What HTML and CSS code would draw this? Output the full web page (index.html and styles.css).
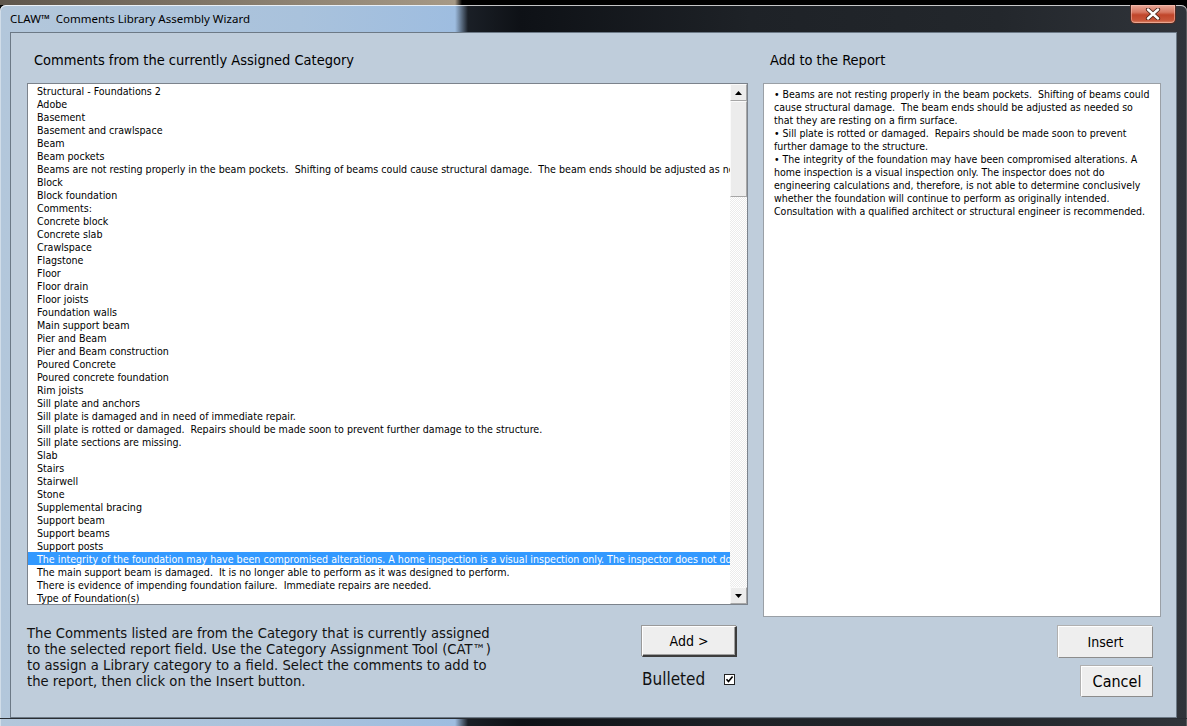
FILE: index.html
```html
<!DOCTYPE html>
<html>
<head>
<meta charset="utf-8">
<title>CLAW Comments Library Assembly Wizard</title>
<link rel="stylesheet" href="styles.css">
</head>
<body>
<div class="desktop"></div>
<div class="window">
  <div class="titlebar">
    <span class="title">CLAW™&nbsp; Comments Library Assembly Wizard</span>
    <div class="close">
      <svg width="16" height="12" viewBox="0 0 16 12"><path d="M3 1.5 L13 10.5 M13 1.5 L3 10.5" stroke="#4a2418" stroke-width="4.2" stroke-linecap="round"/><path d="M3 1.5 L13 10.5 M13 1.5 L3 10.5" stroke="#ffffff" stroke-width="2.4" stroke-linecap="round"/></svg>
    </div>
  </div>
  <div class="client">
    <div class="left-col">
      <div class="pane-title">Comments from the currently Assigned Category</div>
      <div class="listbox">
        <ul class="items">
          <li>Structural - Foundations 2</li>
          <li>Adobe</li>
          <li>Basement</li>
          <li>Basement and crawlspace</li>
          <li>Beam</li>
          <li>Beam pockets</li>
          <li>Beams are not resting properly in the beam pockets.  Shifting of beams could cause structural damage.  The beam ends should be adjusted as needed so that they are resting on a firm surface.</li>
          <li>Block</li>
          <li>Block foundation</li>
          <li>Comments:</li>
          <li>Concrete block</li>
          <li>Concrete slab</li>
          <li>Crawlspace</li>
          <li>Flagstone</li>
          <li>Floor</li>
          <li>Floor drain</li>
          <li>Floor joists</li>
          <li>Foundation walls</li>
          <li>Main support beam</li>
          <li>Pier and Beam</li>
          <li>Pier and Beam construction</li>
          <li>Poured Concrete</li>
          <li>Poured concrete foundation</li>
          <li>Rim joists</li>
          <li>Sill plate and anchors</li>
          <li>Sill plate is damaged and in need of immediate repair.</li>
          <li>Sill plate is rotted or damaged.  Repairs should be made soon to prevent further damage to the structure.</li>
          <li>Sill plate sections are missing.</li>
          <li>Slab</li>
          <li>Stairs</li>
          <li>Stairwell</li>
          <li>Stone</li>
          <li>Supplemental bracing</li>
          <li>Support beam</li>
          <li>Support beams</li>
          <li>Support posts</li>
          <li class="selected">The integrity of the foundation may have been compromised alterations. A home inspection is a visual inspection only. The inspector does not do engineering calculations and, therefore, is not able to determine conclusively whether the foundation will continue to perform as originally intended.</li>
          <li>The main support beam is damaged.  It is no longer able to perform as it was designed to perform.</li>
          <li>There is evidence of impending foundation failure.  Immediate repairs are needed.</li>
          <li>Type of Foundation(s)</li>
        </ul>
        <div class="vscroll">
          <div class="sb-btn"><svg width="7" height="4" viewBox="0 0 7 4"><path d="M3.5 0 L7 4 L0 4 Z" fill="#000"/></svg></div>
          <div class="sb-thumb"></div>
          <div class="sb-track"></div>
          <div class="sb-btn"><svg width="7" height="4" viewBox="0 0 7 4"><path d="M0 0 L7 0 L3.5 4 Z" fill="#000"/></svg></div>
        </div>
      </div>
      <div class="left-bottom">
        <p class="help">The Comments listed are from the Category that is currently assigned<br>to the selected report field. Use the Category Assignment Tool (CAT™)<br>to assign a Library category to a field. Select the comments to add to<br>the report, then click on the Insert button.</p>
        <div class="add-group">
          <button class="btn btn-add">Add &gt;</button>
          <div class="bulleted">
            <span>Bulleted</span>
            <span class="check"><svg width="9" height="9" viewBox="0 0 9 9"><path d="M1.5 4.2 L3.5 6.5 L7.6 1.6" stroke="#000" stroke-width="1.6" fill="none"/></svg></span>
          </div>
        </div>
      </div>
    </div>
    <div class="right-col">
      <div class="pane-title">Add to the Report</div>
      <div class="report">
        <div>• Beams are not resting properly in the beam pockets.  Shifting of beams could</div>
        <div>cause structural damage.  The beam ends should be adjusted as needed so</div>
        <div>that they are resting on a firm surface.</div>
        <div>• Sill plate is rotted or damaged.  Repairs should be made soon to prevent</div>
        <div>further damage to the structure.</div>
        <div>• The integrity of the foundation may have been compromised alterations. A</div>
        <div>home inspection is a visual inspection only. The inspector does not do</div>
        <div>engineering calculations and, therefore, is not able to determine conclusively</div>
        <div>whether the foundation will continue to perform as originally intended.</div>
        <div>Consultation with a qualified architect or structural engineer is recommended.</div>
      </div>
      <div class="actions">
        <button class="btn btn-insert">Insert</button>
        <button class="btn btn-cancel">Cancel</button>
      </div>
    </div>
  </div>
  <div class="bottom-frame"></div>
</div>
</body>
</html>
```

FILE: styles.css
```css
html, body {
  margin: 0;
  padding: 0;
}
body {
  width: 1187px;
  height: 726px;
  overflow: hidden;
  background: #050505;
  font-family: "DejaVu Sans Condensed", "DejaVu Sans", sans-serif;
}
.desktop {
  height: 5px;
  background: linear-gradient(to right, #5e564c 0, #8f8474 300px, #a69986 455px, #000 462px, #000 100%);
}
.window {
  height: 721px;
  display: flex;
  flex-direction: column;
  border-radius: 6px 6px 0 0;
  background: linear-gradient(to right, #b3c7db 0, #a9c2dc 300px, #9ebde0 455px, #1a1f26 468px, #0e1116 520px, #1e2227 750px, #23272c 1000px, #30343a 100%);
  box-shadow: inset 0 1px 0 rgba(255,255,255,0.75), inset 1px 0 0 rgba(255,255,255,0.4), inset -1px 0 0 rgba(120,120,120,0.6);
}
.titlebar {
  height: 27px;
  display: flex;
  align-items: center;
  padding-left: 10px;
}
.title {
  font-family: "Noto Sans", sans-serif;
  font-size: 11.5px;
  color: #000;
  white-space: pre;
}
.close {
  margin-left: auto;
  margin-right: 11px;
  align-self: flex-start;
  width: 44px;
  height: 18px;
  border: 1px solid #4f2a22;
  border-top: none;
  border-radius: 0 0 5px 5px;
  background: linear-gradient(to bottom, #e8a898 0, #d67660 40%, #c0452a 55%, #c8563a 85%, #dd8a6c 100%);
  display: flex;
  align-items: center;
  justify-content: center;
  box-shadow: inset 0 0 0 1px rgba(255,210,200,0.45);
}
.client {
  height: 684px;
  margin: 0 10px;
  border: 1px solid #6c7986;
  background: #bfcddb;
  display: flex;
  padding: 0 15px 0 16px;
}
.left-col {
  width: 721px;
  display: flex;
  flex-direction: column;
}
.right-col {
  width: 398px;
  margin-left: 15px;
  display: flex;
  flex-direction: column;
}
.pane-title {
  height: 50px;
  box-sizing: border-box;
  padding: 18px 0 0 7px;
  line-height: 18px;
  font-size: 14.5px;
  color: #000;
}
.listbox {
  height: 522px;
  box-sizing: border-box;
  border: 1px solid #7c838c;
  background: #fff;
  display: flex;
}
.items {
  list-style: none;
  margin: 0;
  padding: 0;
  flex: 1;
  min-width: 0;
  overflow: hidden;
}
.items li {
  height: 13px;
  line-height: 15px;
  padding-left: 9px;
  font-size: 10.6px;
  color: #000;
  white-space: pre;
  overflow: hidden;
}
.items li.selected {
  background: #3399ff;
  color: #fff;
}
.vscroll {
  width: 17px;
  display: flex;
  flex-direction: column;
  background: repeating-conic-gradient(#ebebeb 0 25%, #ffffff 0 50%) 0 0 / 2px 2px;
}
.sb-btn {
  height: 17px;
  box-sizing: border-box;
  background: #ececec;
  border: 1px solid #fafafa;
  border-right-color: #a6a6a6;
  border-bottom-color: #a6a6a6;
  display: flex;
  align-items: center;
  justify-content: center;
}
.sb-thumb {
  height: 96px;
  box-sizing: border-box;
  background: #ececec;
  border: 1px solid #fafafa;
  border-right-color: #a6a6a6;
  border-bottom-color: #a6a6a6;
}
.sb-track {
  flex: 1;
}
.left-bottom {
  margin-top: 21px;
  display: flex;
  justify-content: space-between;
  padding-right: 11px;
}
.help {
  margin: 0;
  font-family: "DejaVu Sans", sans-serif;
  font-size: 13.2px;
  line-height: 16px;
  color: #111;
}
.add-group {
  width: 95px;
  display: flex;
  flex-direction: column;
}
.btn {
  font-family: "DejaVu Sans Condensed", "DejaVu Sans", sans-serif;
  color: #000;
  background: #eeeeee;
  padding: 0;
  margin: 0;
  box-sizing: border-box;
}
.btn-add {
  width: 95px;
  height: 31px;
  font-size: 14px;
  border: 1px solid #fff;
  border-right: 2px solid #3c3c3c;
  border-bottom: 2px solid #3c3c3c;
  box-shadow: inset -1px -1px 0 #a0a0a0, -1px -1px 0 #9a9a9a;
}
.bulleted {
  margin-top: 13px;
  height: 18px;
  display: flex;
  align-items: center;
  font-size: 17px;
  color: #111;
}
.check {
  margin-left: 19px;
  width: 11px;
  height: 11px;
  box-sizing: border-box;
  border: 1px solid #222;
  background: #fff;
  display: flex;
  align-items: center;
  justify-content: center;
}
.report {
  height: 534px;
  box-sizing: border-box;
  border: 1px solid #9aa0a6;
  background: #fff;
  padding: 3px 0 0 10px;
}
.report div {
  height: 13px;
  line-height: 15px;
  font-size: 10.5px;
  color: #000;
  white-space: pre;
}
.actions {
  margin-top: 9px;
  padding-right: 8px;
  display: flex;
  flex-direction: column;
  align-items: flex-end;
}
.btn-insert {
  width: 95px;
  height: 32px;
  font-size: 14px;
  border: 1px solid #fff;
  border-right-color: #8c8c8c;
  border-bottom-color: #8c8c8c;
  box-shadow: -1px -1px 0 #b0b0b0;
}
.btn-cancel {
  margin-top: 8px;
  width: 72px;
  height: 31px;
  font-size: 16px;
  border: 1px solid #fff;
  border-right-color: #8c8c8c;
  border-bottom-color: #8c8c8c;
  box-shadow: -1px -1px 0 #b0b0b0;
}
.bottom-frame {
  flex: 1;
  border-top: 1px solid #2a2e33;
}
```
